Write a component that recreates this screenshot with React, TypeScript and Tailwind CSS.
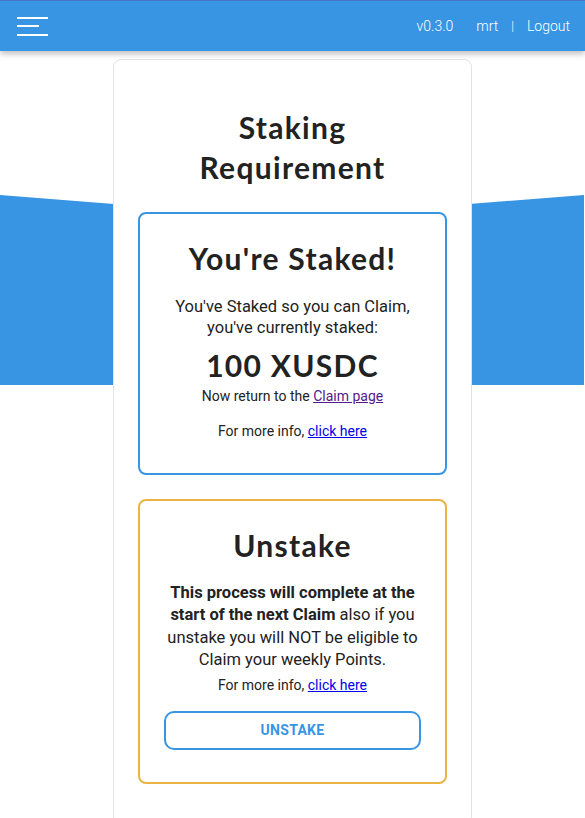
const heading = "font-['Lato',sans-serif] font-bold text-[#222] text-center tracking-[1.3px]";
const body = "font-['Roboto',sans-serif] text-[#222] text-center";

const Header = () => (
  <header className="relative z-20 h-[51px] bg-[#3795e4] border-t border-[#4a72c6] shadow-[0_3px_6px_rgba(0,0,0,0.25)] flex items-center justify-between pl-[17px] pr-[15px]">
    {/* hamburger */}
    <button className="flex flex-col gap-[6.5px] w-[32px]">
      <span className="block h-[2px] w-[31px] bg-white" />
      <span className="block h-[2px] w-[22px] bg-white" />
      <span className="block h-[2px] w-[31px] bg-white" />
    </button>
    <nav className="flex items-center font-['Roboto',sans-serif] text-[14px] font-light text-white">
      <span>v0.3.0</span>
      <span className="ml-[23px]">mrt</span>
      <span className="ml-[13px] text-[12px]">|</span>
      <a href="#" className="ml-[13px]">Logout</a>
    </nav>
  </header>
);

const App = () => {
  return (
    <div className="relative min-h-screen bg-white overflow-hidden">
      <Header />

      {/* blue band behind the card */}
      <div className="absolute left-0 top-[195px] h-[190px] w-[584px] bg-[#3795e4] [clip-path:polygon(0_0,50%_23px,100%_0,100%_100%,0_100%)]" />

      <main className="relative z-10 mx-auto mt-[8px] w-[359px] rounded-[8px] border border-[#e3e3e3] bg-white px-[24px] pt-[47px] pb-[40px]">
        <h1 className={`${heading} text-[30px] leading-[40px]`}>
          Staking
          <br />
          Requirement
        </h1>

        {/* staked status */}
        <section className="mt-[25px] rounded-[8px] border-2 border-[#3795e4] px-[24px] pt-[26px] pb-[32px]">
          <h2 className={`${heading} text-[30px] leading-[36px]`}>You're Staked!</h2>
          <p className={`${body} mt-[20px] text-[16.5px] leading-[21px]`}>
            You've Staked so you can Claim,
            <br />
            you've currently staked:
          </p>
          <p className={`${heading} mt-[9px] text-[30px] leading-[36px]`}>100 XUSDC</p>
          <p className={`${body} mt-[3px] text-[14px] leading-[20px]`}>
            Now return to the{" "}
            <a href="#" className="text-[#551a8b] underline">
              Claim page
            </a>
          </p>
          <p className={`${body} mt-[15px] text-[14px] leading-[20px]`}>
            For more info,{" "}
            <a href="#" className="text-[#0000ee] underline">
              click here
            </a>
          </p>
        </section>

        {/* unstake */}
        <section className="mt-[24px] rounded-[8px] border-2 border-[#e9b443] px-[24px] pt-[26px] pb-[32px]">
          <h2 className={`${heading} text-[30px] leading-[36px]`}>Unstake</h2>
          <p className={`${body} mt-[19px] text-[16.5px] leading-[22.3px]`}>
            <strong className="font-bold">This process will complete at the start of the next Claim</strong> also if
            you unstake you will NOT be eligible to Claim your weekly Points.
          </p>
          <p className={`${body} mt-[4px] text-[14px] leading-[20px]`}>
            For more info,{" "}
            <a href="#" className="text-[#0000ee] underline">
              click here
            </a>
          </p>
          <button className="mt-[16px] flex h-[39px] w-full items-center justify-center rounded-[10px] border-2 border-[#3795e4] bg-white font-['Roboto',sans-serif] text-[14px] font-bold tracking-[0.3px] text-[#3795e4]">
            UNSTAKE
          </button>
        </section>
      </main>
    </div>
  );
};

export default App;
